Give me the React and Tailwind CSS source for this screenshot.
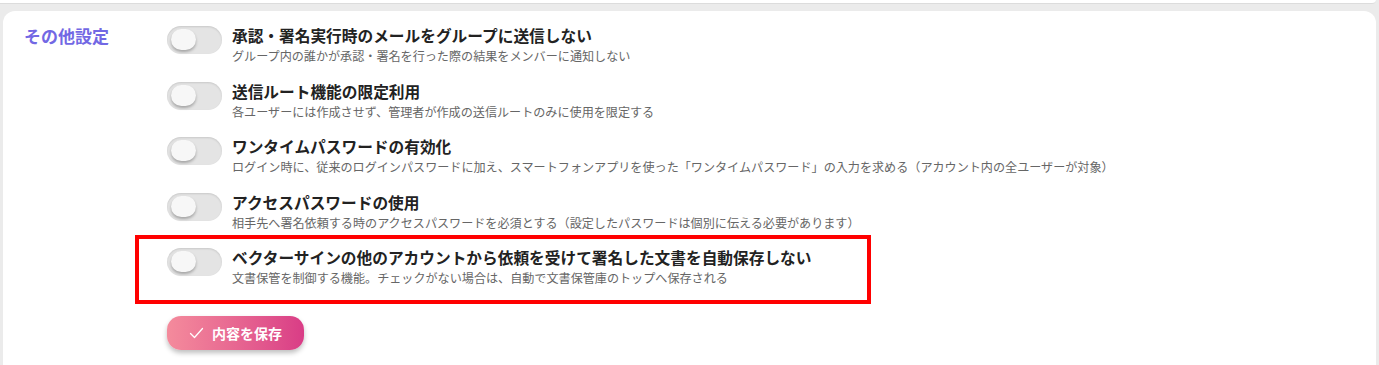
import React from 'react';

const settings = [
  {
    title: '承認・署名実行時のメールをグループに送信しない',
    desc: 'グループ内の誰かが承認・署名を行った際の結果をメンバーに通知しない',
  },
  {
    title: '送信ルート機能の限定利用',
    desc: '各ユーザーには作成させず、管理者が作成の送信ルートのみに使用を限定する',
  },
  {
    title: 'ワンタイムパスワードの有効化',
    desc: 'ログイン時に、従来のログインパスワードに加え、スマートフォンアプリを使った「ワンタイムパスワード」の入力を求める（アカウント内の全ユーザーが対象）',
  },
  {
    title: 'アクセスパスワードの使用',
    desc: '相手先へ署名依頼する時のアクセスパスワードを必須とする（設定したパスワードは個別に伝える必要があります）',
  },
  {
    title: 'ベクターサインの他のアカウントから依頼を受けて署名した文書を自動保存しない',
    desc: '文書保管を制御する機能。チェックがない場合は、自動で文書保管庫のトップへ保存される',
  },
];

// --- Toggle (off state) ---
const Toggle = () => (
  <div className="relative w-[55px] h-[28px] shrink-0 rounded-full bg-[#e4e4e4] shadow-[inset_0_1px_2px_rgba(0,0,0,0.12)]">
    <div className="absolute left-[4px] top-[3px] w-[25px] h-[21px] rounded-full bg-[#f7f7f7] shadow-[0_2px_3px_rgba(0,0,0,0.28)]" />
  </div>
);

const App = () => {
  return (
    <div
      className="w-[1379px] h-[365px] overflow-hidden bg-[#ebebeb]"
      style={{ fontFamily: '"Noto Sans CJK JP", "Noto Sans", sans-serif' }}
    >
      {/* Bottom edge of the previous card */}
      <div className="h-[4px] mr-[3px] bg-white rounded-br-[10px] border-b border-[#dcdcdc]" />

      <div className="relative mt-[7px] ml-[3px] mr-[3px] h-[380px] rounded-[12px] bg-white pt-[15px] pl-[21px]">
        <div className="flex">
          <div className="w-[143px] shrink-0 text-[17px] leading-[20px] font-bold text-[#7268e4]">
            その他設定
          </div>

          <div className="flex flex-col">
            <div className="flex flex-col gap-[17.5px]">
              {settings.map((s) => (
                <div key={s.title} className="flex items-start gap-[10px]">
                  <Toggle />
                  <div className="flex flex-col">
                    <div className="text-[15.7px] leading-[20px] font-bold text-[#222]">{s.title}</div>
                    <div className="mt-[2px] text-[12.1px] leading-[16px] text-[#666]">{s.desc}</div>
                  </div>
                </div>
              ))}
            </div>

            {/* Action */}
            <button className="mt-[30px] w-[137px] h-[34px] flex items-center justify-center gap-[8px] rounded-[14px] bg-gradient-to-r from-[#f48b9c] to-[#d93c86] text-white text-[14px] font-bold shadow-[0_3px_5px_rgba(0,0,0,0.25)]">
              <svg width="15" height="12" viewBox="0 0 15 12" fill="none">
                <path d="M1.5 6.5 L5.5 10.5 L13.5 1.5" stroke="white" strokeWidth="1.3" strokeLinecap="round" strokeLinejoin="round" />
              </svg>
              <span>内容を保存</span>
            </button>
          </div>
        </div>

        {/* Highlight annotation */}
        <div className="absolute left-[132px] top-[224px] w-[736px] h-[69px] border-[4px] border-[#ff0000]" />
      </div>
    </div>
  );
};

export default App;
